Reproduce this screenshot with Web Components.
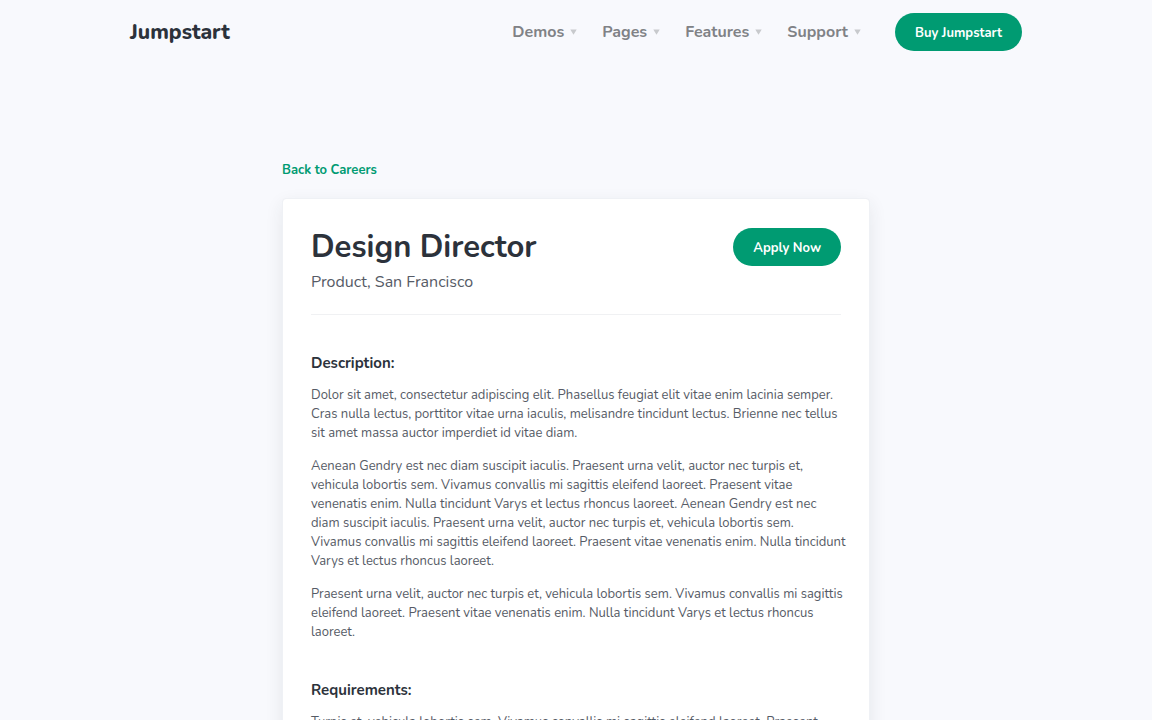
<!DOCTYPE html>
<html lang="en">
<head>
<meta charset="utf-8">
<meta name="viewport" content="width=device-width, initial-scale=1">
<title>Design Director - Jumpstart</title>
<style>
html{background:#f8f9fd}
body{margin:0;font-family:"Nunito","Lato","Open Sans",sans-serif;font-size:13px;line-height:19px;color:#565b66;--ink:#2c323b;--brand:#009b72}
</style>
</head>
<body>
<site-header>
  <nav-item>Demos</nav-item>
  <nav-item>Pages</nav-item>
  <nav-item>Features</nav-item>
  <nav-item>Support</nav-item>
  <pill-button slot="action">Buy Jumpstart</pill-button>
</site-header>
<job-page>
  <job-card>
    <span slot="title">Design Director</span>
    <span slot="place">Product, San Francisco</span>
    <pill-button slot="action">Apply Now</pill-button>
    <job-section heading="Description:">
      <p>Dolor sit amet, consectetur adipiscing elit. Phasellus feugiat elit vitae enim lacinia semper.<br>
      Cras nulla lectus, porttitor vitae urna iaculis, melisandre tincidunt lectus. Brienne nec tellus<br>
      sit amet massa auctor imperdiet id vitae diam.</p>
      <p>Aenean Gendry est nec diam suscipit iaculis. Praesent urna velit, auctor nec turpis et,<br>
      vehicula lobortis sem. Vivamus convallis mi sagittis eleifend laoreet. Praesent vitae<br>
      venenatis enim. Nulla tincidunt Varys et lectus rhoncus laoreet. Aenean Gendry est nec<br>
      diam suscipit iaculis. Praesent urna velit, auctor nec turpis et, vehicula lobortis sem.<br>
      Vivamus convallis mi sagittis eleifend laoreet. Praesent vitae venenatis enim. Nulla tincidunt<br>
      Varys et lectus rhoncus laoreet.</p>
      <p>Praesent urna velit, auctor nec turpis et, vehicula lobortis sem. Vivamus convallis mi sagittis<br>
      eleifend laoreet. Praesent vitae venenatis enim. Nulla tincidunt Varys et lectus rhoncus<br>
      laoreet.</p>
    </job-section>
    <job-section heading="Requirements:">
      <p>Turpis et, vehicula lobortis sem. Vivamus convallis mi sagittis eleifend laoreet. Praesent</p>
    </job-section>
  </job-card>
</job-page>
<script>
const define = (name, html) => {
  const template = document.createElement('template');
  template.innerHTML = html;
  customElements.define(name, class extends HTMLElement {
    constructor() {
      super();
      this.attachShadow({ mode: 'open' }).append(template.content.cloneNode(true));
    }
    connectedCallback() {
      const heading = this.getAttribute('heading');
      if (heading) this.shadowRoot.querySelector('h2').textContent = heading;
    }
  });
};

define('pill-button', `
<style>
:host{display:block;flex:none}
button{display:block;height:38px;padding:2px 20px 0;border:0;border-radius:19px;background:var(--brand);color:#fff;font:inherit;font-size:13px;font-weight:700;line-height:36px;white-space:nowrap;cursor:pointer}
</style>
<button type="button"><slot></slot></button>`);

define('nav-item', `
<style>
:host{display:block}
a{display:flex;align-items:center;gap:6px;color:#808286;font-size:16px;line-height:24px;font-weight:700;text-decoration:none}
svg{display:block;fill:#c8cacd}
</style>
<a href="#"><slot></slot><svg width="7" height="6" viewBox="0 0 7 6" aria-hidden="true"><path d="M.3.4h6.4L3.5 5.8z"/></svg></a>`);

define('site-header', `
<style>
:host{display:block;padding:13px 24px}
header{display:flex;align-items:center;justify-content:space-between;max-width:892px;margin:0 auto}
.logo{color:var(--ink);font-size:21px;line-height:38px;font-weight:800;text-decoration:none}
.right{display:flex;align-items:center;gap:34px}
nav{display:flex;gap:25px}
</style>
<header><a class="logo" href="#">Jumpstart</a><div class="right"><nav aria-label="Main"><slot></slot></nav><slot name="action"></slot></div></header>`);

define('job-page', `
<style>
:host{display:block;padding:97px 24px 64px}
main{max-width:588px;margin:0 auto}
a{display:inline-block;margin-bottom:18px;color:var(--brand);font-weight:700;text-decoration:none}
</style>
<main><a href="#">Back to Careers</a><slot></slot></main>`);

define('job-card', `
<style>
:host{display:block;padding:29px 28px 28px;border:1px solid #eff1f5;border-radius:4px;background:#fff;background-clip:padding-box;box-shadow:0 6px 18px rgba(44,50,59,.09)}
.top{display:flex;justify-content:space-between;align-items:flex-start;padding-bottom:20px;border-bottom:1px solid #f0f1f3}
h1{margin:0;color:var(--ink);font-size:31px;line-height:38px;font-weight:700}
.place{margin:4px 0 0;font-size:16px;line-height:24px}
</style>
<div class="top"><div><h1><slot name="title"></slot></h1><p class="place"><slot name="place"></slot></p></div><slot name="action"></slot></div>
<slot></slot>`);

define('job-section', `
<style>
:host{display:block;margin-top:36px}
h2{margin:0 0 11px;color:var(--ink);font-size:15px;line-height:24px;font-weight:700}
::slotted(p){margin:0 0 14px;white-space:nowrap}
@media (max-width:620px){::slotted(p){white-space:normal}}
</style>
<h2></h2><slot></slot>`);
</script>
</body>
</html>
